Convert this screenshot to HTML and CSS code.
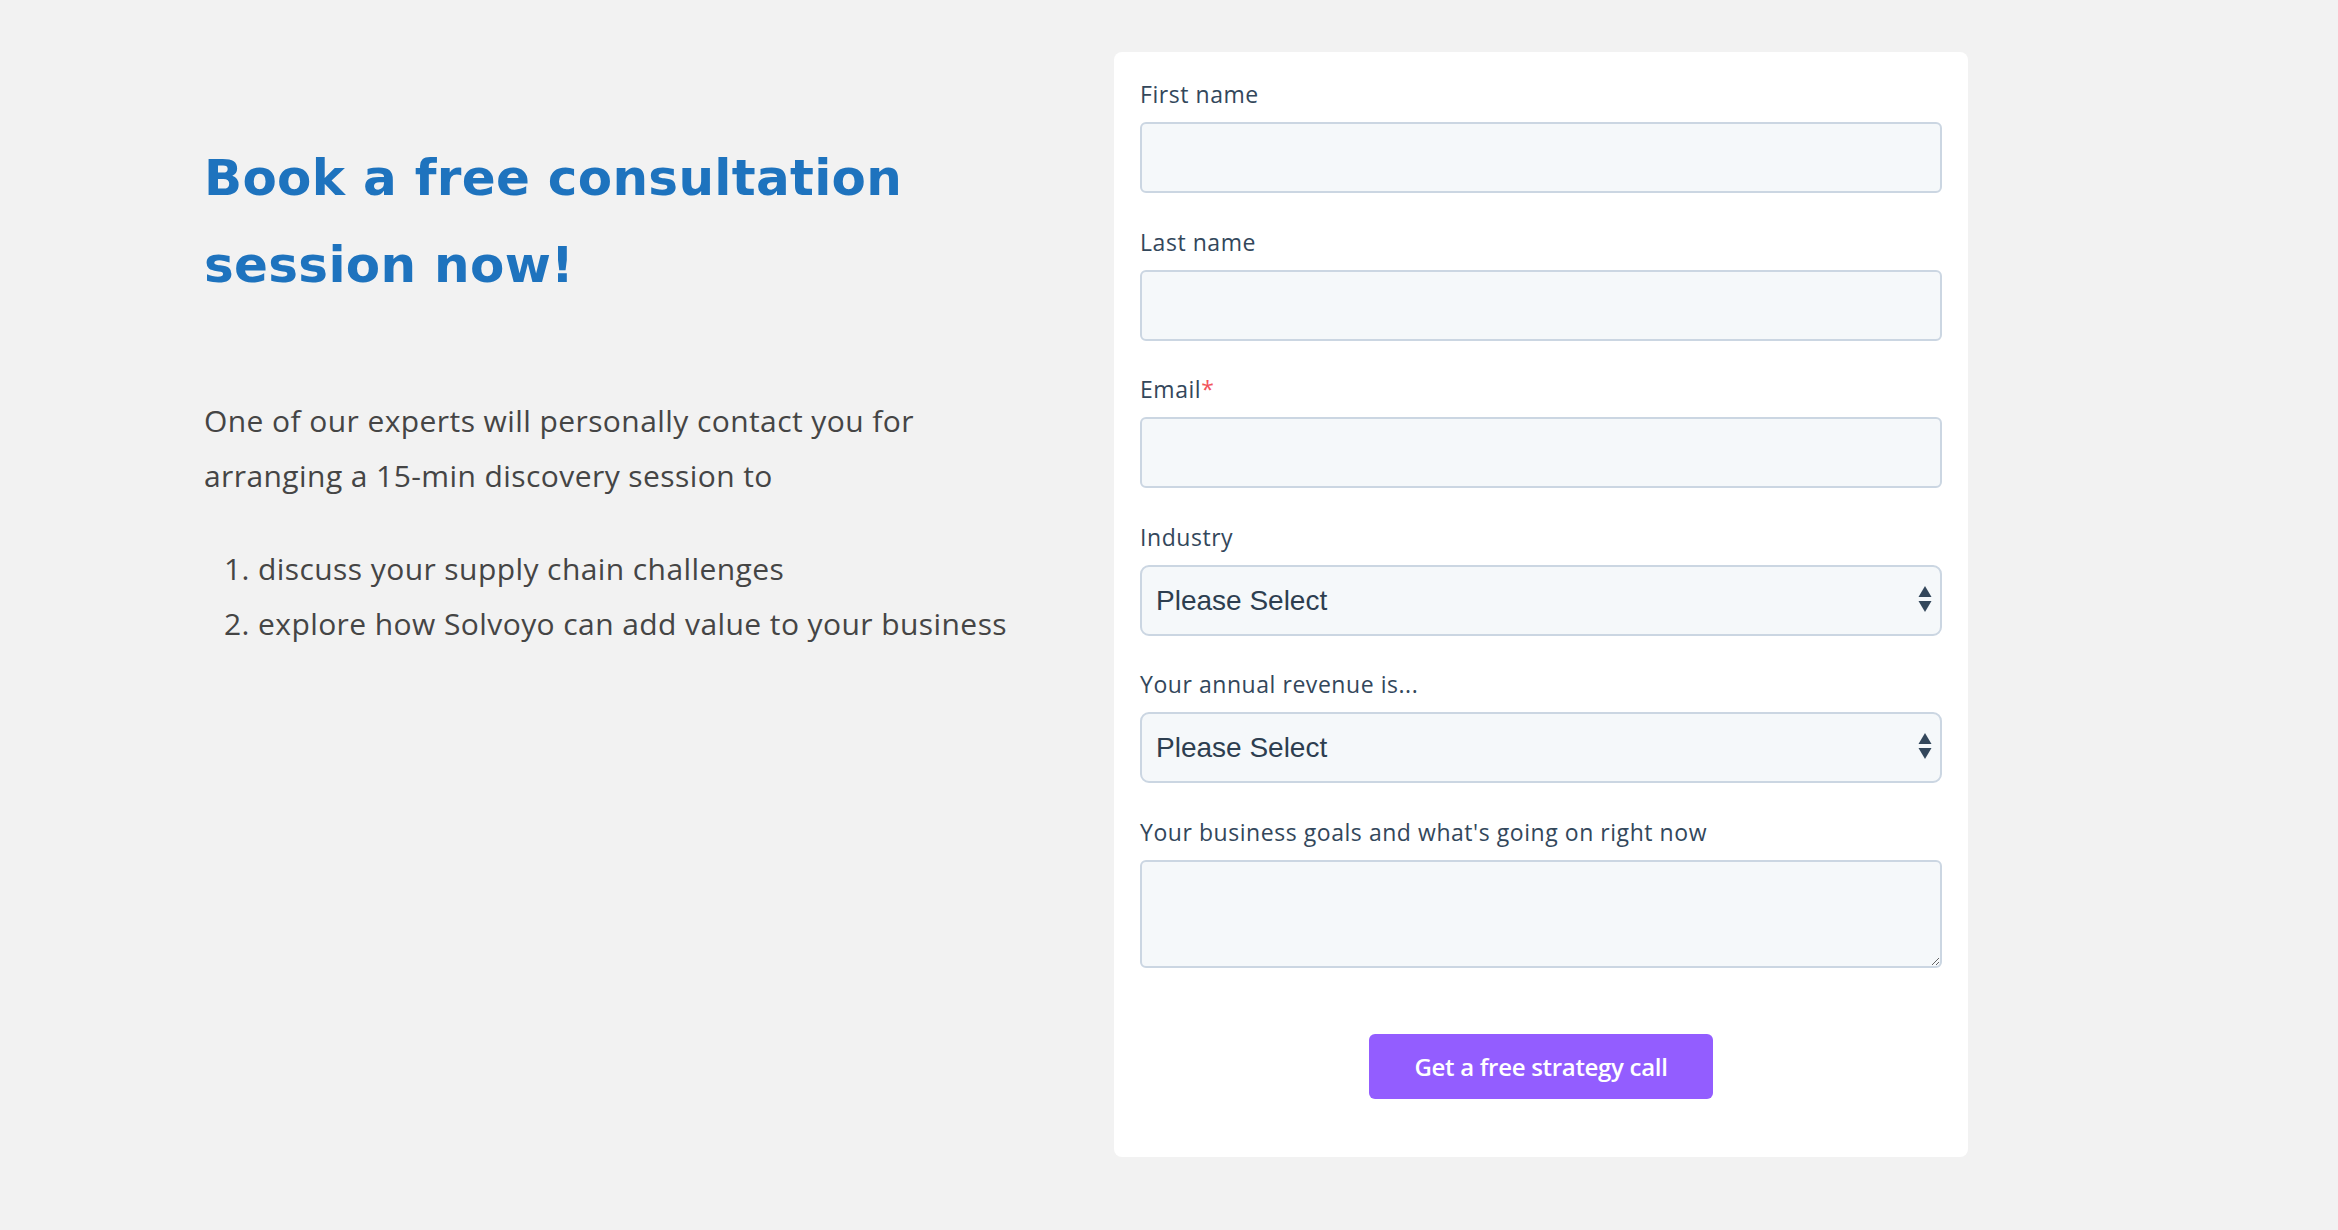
FILE: index.html
```html
<!DOCTYPE html>
<html>
<head>
    <meta charset="utf-8">
    <link rel="stylesheet" href="styles.css">
</head>
<body>
    <div class="page">
        <div class="intro">
            <h1 class="intro-title">Book a free consultation session now!</h1>
            <p class="intro-text">One of our experts will personally contact you for arranging a 15-min discovery session to</p>
            <ol class="intro-list">
                <li>discuss your supply chain challenges</li>
                <li>explore how Solvoyo can add value to your business</li>
            </ol>
        </div>

        <form class="card">
            <div class="field">
                <label for="firstname">First name</label>
                <input type="text" id="firstname" class="input">
            </div>
            <div class="field">
                <label for="lastname">Last name</label>
                <input type="text" id="lastname" class="input">
            </div>
            <div class="field">
                <label for="email">Email<span class="req">*</span></label>
                <input type="email" id="email" class="input">
            </div>
            <div class="field">
                <label for="industry">Industry</label>
                <div class="select-wrap">
                    <select id="industry" class="input select">
                        <option>Please Select</option>
                    </select>
                    <svg class="select-arrows" width="14" height="27" viewBox="0 0 14 27">
                        <path d="M7 0 L13.5 11 L0.5 11 Z" fill="#33475b"/>
                        <path d="M0.5 15 L13.5 15 L7 26 Z" fill="#33475b"/>
                    </svg>
                </div>
            </div>
            <div class="field">
                <label for="revenue">Your annual revenue is...</label>
                <div class="select-wrap">
                    <select id="revenue" class="input select">
                        <option>Please Select</option>
                    </select>
                    <svg class="select-arrows" width="14" height="27" viewBox="0 0 14 27">
                        <path d="M7 0 L13.5 11 L0.5 11 Z" fill="#33475b"/>
                        <path d="M0.5 15 L13.5 15 L7 26 Z" fill="#33475b"/>
                    </svg>
                </div>
            </div>
            <div class="field">
                <label for="goals">Your business goals and what's going on right now</label>
                <textarea id="goals" class="input textarea"></textarea>
            </div>
            <div class="actions">
                <button type="button" class="submit">Get a free strategy call</button>
            </div>
        </form>
    </div>
</body>
</html>
```
FILE: styles.css
```css
body {
    margin: 0;
    background: #f2f2f2;
}

.page {
    display: flex;
    align-items: flex-start;
    padding: 52px 0 60px 204px;
}

/* левая колонка */
.intro {
    width: 830px;
    margin-right: 80px;
}

.intro-title {
    margin: 83px 0 0;
    font-family: "DejaVu Sans", sans-serif;
    font-weight: 700;
    font-size: 50px;
    line-height: 87px;
    letter-spacing: 0.3px;
    color: #1e73be;
}

.intro-text {
    margin: 84px 0 0;
    font-family: "Open Sans", sans-serif;
    font-size: 30px;
    line-height: 55px;
    letter-spacing: 0.42px;
    color: #454545;
}

.intro-list {
    margin: 38px 0 0;
    padding-left: 54px;
    font-family: "Open Sans", sans-serif;
    font-size: 30px;
    line-height: 55px;
    letter-spacing: 0.42px;
    color: #454545;
}

/* форма */
.card {
    width: 854px;
    box-sizing: border-box;
    padding: 27px 26px 58px;
    background: #fff;
    border-radius: 8px;
}

.field {
    margin-bottom: 33.6px;
}

.field label {
    display: block;
    margin-bottom: 13px;
    font-family: "Open Sans", sans-serif;
    font-size: 23px;
    line-height: 30px;
    letter-spacing: 0.55px;
    color: #33475b;
}

.req {
    color: #f2545b;
}

.input {
    display: block;
    width: 100%;
    height: 71px;
    box-sizing: border-box;
    margin: 0;
    padding: 0 14px;
    background: #f5f8fa;
    border: 2px solid #cbd6e2;
    border-radius: 6px;
    font-family: "Liberation Sans", Arial, sans-serif;
    font-size: 28px;
    color: #2d3e50;
    outline: none;
}

.select-wrap {
    position: relative;
}

.select {
    appearance: none;
    -webkit-appearance: none;
    border-radius: 9px;
}

.select-arrows {
    position: absolute;
    right: 10px;
    top: 21px;
    pointer-events: none;
}

.textarea {
    height: 108px;
    padding: 10px 14px;
    resize: vertical;
}

.actions {
    display: flex;
    justify-content: center;
    padding-top: 32.4px;
}

.submit {
    height: 65px;
    padding: 0 45px;
    background: #935dff;
    color: #fff;
    border: none;
    border-radius: 6px;
    font-family: "Open Sans", sans-serif;
    font-weight: 600;
    font-size: 24px;
    letter-spacing: -0.3px;
    cursor: pointer;
}
```
